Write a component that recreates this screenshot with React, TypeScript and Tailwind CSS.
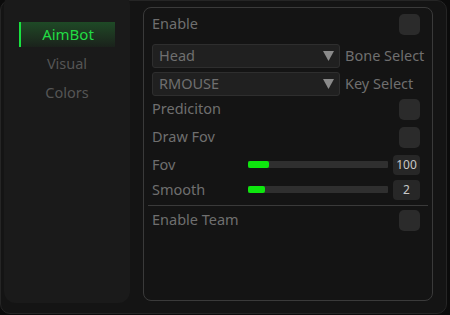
import React from 'react';

const font = { fontFamily: '"Noto Sans", "Open Sans", sans-serif' };

function Check() {
  return <div className="h-[21px] w-[21px] rounded-[5px] bg-[#2b2b2b]" />;
}

function Combo({ value, label }: { value: string; label: string }) {
  return (
    <div className="flex h-[24px] items-center whitespace-nowrap">
      <div className="flex h-[24px] w-[188px] shrink-0 items-center justify-between rounded-[3px] border border-[#2e2e2e] bg-[#202020] pl-[6px] pr-[5px]">
        <span className="text-[14.5px] text-[#6f6f6f]">{value}</span>
        <svg width="11" height="10" viewBox="0 0 11 10">
          <path d="M0 0H11L5.5 10Z" fill="#8a8a8a" />
        </svg>
      </div>
      <span className="ml-[5px] text-[14.5px] text-[#6f6f6f]">{label}</span>
    </div>
  );
}

function Slider({ label, value, pct }: { label: string; value: string; pct: number }) {
  return (
    <div className="flex h-[21px] items-center">
      <span className="w-[96px] text-[14.5px] text-[#6f6f6f]">{label}</span>
      <div className="relative h-[7px] w-[140px] rounded-[1px] bg-[#2f2f2f]">
        <div className="h-full rounded-[2px] bg-[#0ee60e]" style={{ width: `${pct}%` }} />
      </div>
      <div className="ml-[5px] flex h-[20px] w-[27px] items-center justify-center rounded-[4px] bg-[#272727] text-[12px] text-[#c8c8c8]">
        {value}
      </div>
    </div>
  );
}

export default function App() {
  return (
    <div className="h-[315px] w-[450px] bg-[#0b0b0b]" style={font}>
      <div className="flex h-[314px] w-[447px] rounded-[10px] border border-[#252525] bg-[#141414] pl-[3px] pt-0">
        {/* sidebar */}
        <div className="mt-[-8px] flex h-[310px] w-[126px] flex-col items-center rounded-[12px] bg-[#1a1a1a] pt-[29px]">
          <div className="flex h-[25px] w-[96px] items-center justify-center border-l-[2px] border-[#19e040] bg-gradient-to-b from-[#1e4a26] to-[#1a221b] text-[15px] text-[#22dd44]">
            AimBot
          </div>
          <div className="mt-[4px] flex h-[25px] items-center text-[14.5px] text-[#555555]">Visual</div>
          <div className="mt-[4px] flex h-[25px] items-center text-[14.5px] text-[#555555]">Colors</div>
        </div>

        {/* main panel */}
        <div className="ml-[13px] mt-[6px] flex h-[294px] w-[290px] flex-col overflow-hidden rounded-[8px] border border-[#3a3a3a] px-[8px] pt-[5px]">
          <div className="flex h-[22px] items-center justify-between pr-[4px]">
            <span className="text-[14.5px] text-[#6f6f6f]">Enable</span>
            <Check />
          </div>
          <div className="mt-[9px]">
            <Combo value="Head" label="Bone Select" />
          </div>
          <div className="mt-[4px]">
            <Combo value="RMOUSE" label="Key Select" />
          </div>
          <div className="mt-[2px] flex h-[22px] items-center justify-between pr-[4px]">
            <span className="text-[14.5px] text-[#6f6f6f]">Prediciton</span>
            <Check />
          </div>
          <div className="mt-[6px] flex h-[22px] items-center justify-between pr-[4px]">
            <span className="text-[14.5px] text-[#6f6f6f]">Draw Fov</span>
            <Check />
          </div>
          <div className="mt-[6px]">
            <Slider label="Fov" value="100" pct={15} />
          </div>
          <div className="mt-[4px]">
            <Slider label="Smooth" value="2" pct={12} />
          </div>
          <div className="mx-[-4px] mt-[5px] h-[1px] bg-[#3a3a3a]" />
          <div className="mt-[3px] flex h-[22px] items-center justify-between pr-[4px]">
            <span className="text-[14.5px] text-[#6f6f6f]">Enable Team</span>
            <Check />
          </div>
        </div>
      </div>
    </div>
  );
}
